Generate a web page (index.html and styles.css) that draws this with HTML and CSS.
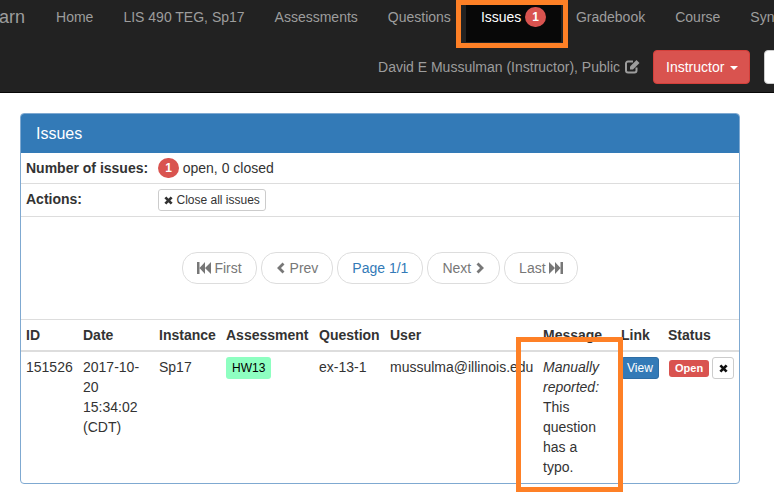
FILE: index.html
```html
<!DOCTYPE html>
<html lang="en">
<head>
    <meta charset="UTF-8">
    <meta name="viewport" content="width=device-width, initial-scale=1.0">
    <title>Issues</title>
    <link rel="stylesheet" href="styles.css">
</head>
<body>

<nav class="navbar">
    <div class="nav-top">
        <a class="brand">PrairieLearn</a>
        <a class="nav-link">Home</a>
        <a class="nav-link">LIS 490 TEG, Sp17</a>
        <a class="nav-link">Assessments</a>
        <a class="nav-link">Questions</a>
        <a class="nav-link active">Issues <span class="badge">1</span></a>
        <a class="nav-link">Gradebook</a>
        <a class="nav-link">Course</a>
        <a class="nav-link">Sync</a>
    </div>
    <div class="nav-user">
        <span class="user-text">David E Mussulman (Instructor), Public</span>
        <svg class="icon-edit" viewBox="0 0 15 15"><path d="M11.500 8.500v3a2 2 0 0 1-2 2h-6.500a2 2 0 0 1-2-2v-7a2 2 0 0 1 2-2h5" fill="none" stroke="currentColor" stroke-width="2"/><path d="M5 7.500 L11.500 1 L14.500 4 L8 10.500 H5Z" fill="currentColor"/></svg>
        <button class="btn btn-danger">Instructor <span class="caret"></span></button>
        <button class="btn btn-white">Change</button>
    </div>
</nav>

<div class="panel">
    <div class="panel-heading">Issues</div>

    <table class="summary">
        <tr><th>Number of issues:</th><td><span class="badge">1</span> open, 0 closed</td></tr>
        <tr><th>Actions:</th><td><button class="btn-xs"><svg class="icon-x" viewBox="0 0 10 10"><path d="M1.500 1.500 8.500 8.500M8.500 1.500 1.500 8.500" stroke="currentColor" stroke-width="3"/></svg> Close all issues</button></td></tr>
    </table>

    <div class="pager">
        <a class="page-btn"><svg class="icon-step" viewBox="0 0 14 12"><path d="M0 0h2.500v12H0zM8 0v12L2.500 6zM14 0v12L8 6z"/></svg> First</a>
        <a class="page-btn"><svg class="icon-chev" viewBox="0 0 9 12"><path d="M7 1.500 2.500 6 7 10.500" fill="none" stroke="currentColor" stroke-width="2.800"/></svg> Prev</a>
        <a class="page-btn current">Page 1/1</a>
        <a class="page-btn">Next <svg class="icon-chev" viewBox="0 0 9 12"><path d="M2 1.500 6.500 6 2 10.500" fill="none" stroke="currentColor" stroke-width="2.800"/></svg></a>
        <a class="page-btn">Last <svg class="icon-step" viewBox="0 0 14 12"><path d="M14 0h-2.500v12H14zM6 0v12l5.500-6zM0 0v12l6-6z"/></svg></a>
    </div>

    <table class="issues">
        <colgroup>
            <col class="c-id"><col class="c-date"><col class="c-inst"><col class="c-asmt"><col class="c-q"><col class="c-user"><col class="c-msg"><col class="c-link"><col class="c-status">
        </colgroup>
        <thead>
            <tr><th>ID</th><th>Date</th><th>Instance</th><th>Assessment</th><th>Question</th><th>User</th><th>Message</th><th>Link</th><th>Status</th></tr>
        </thead>
        <tbody>
            <tr>
                <td>151526</td>
                <td>2017-10-20 15:34:02 (CDT)</td>
                <td>Sp17</td>
                <td><span class="asmt-badge">HW13</span></td>
                <td>ex-13-1</td>
                <td>mussulma@illinois.edu</td>
                <td><em>Manually reported:</em> This question has a typo.</td>
                <td><a class="btn-view">View</a></td>
                <td class="status-cell"><span class="label-open">Open</span><button class="btn-close"><svg class="icon-x" viewBox="0 0 10 10"><path d="M1.500 1.500 8.500 8.500M8.500 1.500 1.500 8.500" stroke="currentColor" stroke-width="3"/></svg></button></td>
            </tr>
        </tbody>
    </table>
</div>

<!-- callouts drawn over the screenshot -->
<div class="callout callout-nav"></div>
<div class="callout callout-msg"></div>

</body>
</html>
```

FILE: styles.css
```css
html, body { height: 100%; }
body { font-family: "Liberation Sans", Arial, sans-serif; font-size: 14px; line-height: 20px; color: #333; margin: 0; padding: 0; background: #fff; position: relative; overflow: hidden; }
a { text-decoration: none; }
svg { vertical-align: -1px; }

.navbar { background-color: #222; border-bottom: 1px solid #080808; height: 92px; overflow: hidden; }
.nav-top { display: flex; height: 42px; white-space: nowrap; }
.brand { font-size: 18px; color: #9d9d9d; margin-left: -73px; padding: 7px 16px 15px 0; }
.nav-link { color: #9d9d9d; padding: 7px 15px 15px; flex: none; }
.nav-link.active { background-color: #080808; color: #fff; }

.badge { display: inline-block; min-width: 20px; height: 20px; padding: 4px 7px; box-sizing: border-box; border-radius: 10px; background-color: #d9534f; color: #fff; font-size: 12px; font-weight: bold; line-height: 12px; text-align: center; vertical-align: top; }

.nav-user { display: flex; align-items: center; justify-content: flex-end; margin: 8px -60px 0 0; color: #9d9d9d; white-space: nowrap; }
.icon-edit { width: 15px; height: 15px; margin: -2px 0 0 5px; }
.btn { font: inherit; height: 34px; padding: 6px 12px; border: 1px solid transparent; border-radius: 4px; }
.btn-danger { background-color: #d9534f; border-color: #d43f3a; color: #fff; margin-left: 13px; width: 97px; }
.btn-white { background-color: #fff; border-color: #ccc; color: #333; margin-left: 14px; width: 70px; }
.caret { display: inline-block; width: 0; height: 0; margin-left: 2px; vertical-align: middle; border-top: 4px solid; border-left: 4px solid transparent; border-right: 4px solid transparent; }

.panel { margin: 20px 34px 0 20px; border: 1px solid #7fa9d1; border-radius: 4px; height: 371px; box-sizing: border-box; overflow: hidden; }
.panel-heading { background-color: #337ab7; color: #fff; font-size: 16px; padding: 10px 15px; height: 39px; box-sizing: border-box; line-height: 19px; }

table { border-collapse: collapse; border-spacing: 0; width: 100%; }
th, td { padding: 5px; text-align: left; vertical-align: top; }
.summary tr { border-bottom: 1px solid #ddd; }
.summary th { width: 122px; white-space: nowrap; }

.btn-xs { font: inherit; font-size: 12px; line-height: 18px; height: 22px; padding: 1px 5px; background: #fff; border: 1px solid #ccc; border-radius: 3px; color: #333; }
.icon-x { width: 9px; height: 9px; vertical-align: -0.5px; }

.pager { display: flex; justify-content: center; gap: 4px; padding: 35px 0; border-bottom: 1px solid #ddd; }
.page-btn { padding: 5px 14px; border: 1px solid #ddd; border-radius: 15px; color: #777; background: #fff; white-space: nowrap; }
.page-btn.current { color: #337ab7; }
.icon-step { width: 14px; height: 12px; fill: currentColor; }
.icon-chev { width: 10px; height: 12px; }

.issues { table-layout: fixed; }
.issues thead th { border-bottom: 2px solid #ddd; }
.c-id { width: 57px; }
.c-date { width: 76px; }
.c-inst { width: 67px; }
.c-asmt { width: 93px; }
.c-q { width: 71px; }
.c-user { width: 153px; }
.c-msg { width: 78px; }
.c-link { width: 47px; }
.c-status { width: 76px; }

.asmt-badge { display: inline-block; padding: 1px 6px; background-color: #8effc1; border-radius: 3px; color: #000; font-size: 12px; line-height: 20px; }
.btn-view { display: inline-block; padding: 1px 5px; background-color: #337ab7; border: 1px solid #2e6da4; border-radius: 3px; color: #fff; font-size: 12px; line-height: 18px; }
.status-cell { display: flex; align-items: center; gap: 3px; }
.label-open { margin-left: 1px; padding: 2px 6px; background-color: #d9534f; border-radius: 3px; color: #fff; font-size: 11px; font-weight: bold; line-height: 13px; }
.btn-close { width: 22px; height: 22px; padding: 0; background: #fff; border: 1px solid #ccc; border-radius: 3px; color: #111; }

.callout { position: absolute; border: 5px solid #fe8026; box-sizing: border-box; }
.callout-nav { left: 456px; top: 0; width: 112px; height: 48px; }
.callout-msg { left: 516px; top: 337px; width: 107px; height: 155px; }
```
